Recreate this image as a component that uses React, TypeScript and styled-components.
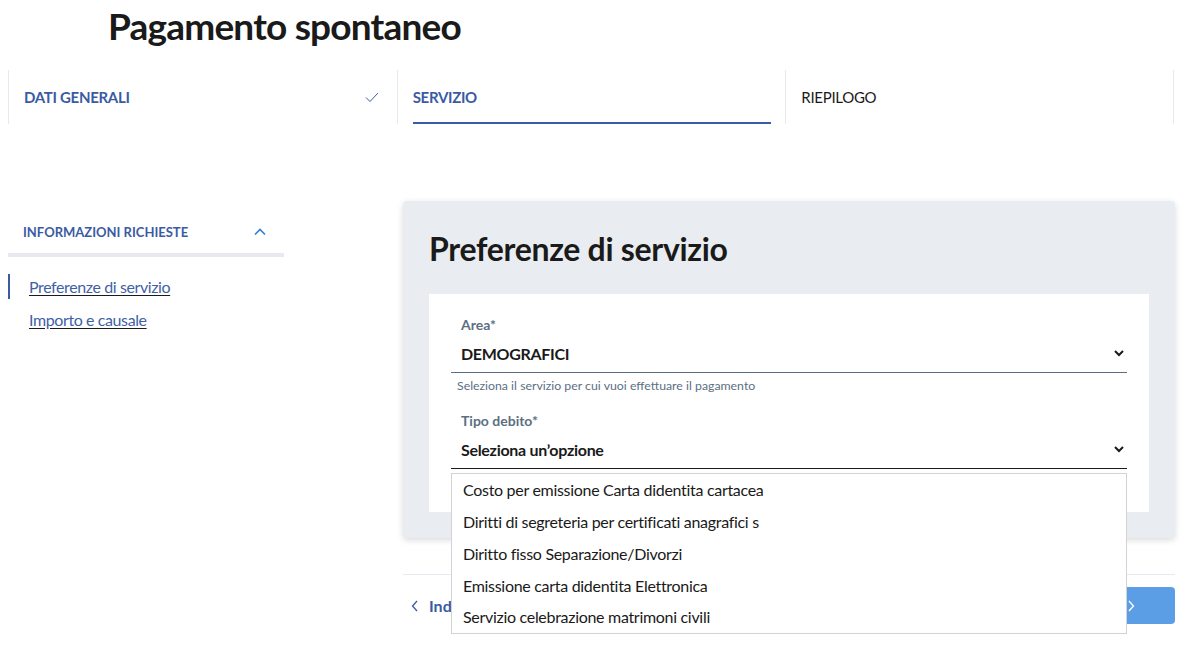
import React from 'react'
import styled, { createGlobalStyle } from 'styled-components'

const font = `'Lato', 'Roboto', sans-serif`

const colors = {
  blue: '#3a5ba3',
  link: '#3f5fa8',
  text: '#1a1a1a',
  label: '#5c6f82',
  divider: '#e6e9f2',
  card: '#e9edf1',
  button: '#5c9ee6'
}

const GlobalStyle = createGlobalStyle`
  body {
    margin: 0;
    background: #fff;
    font-family: ${font};
    color: ${colors.text};
  }
`

const Page = styled.div`
  width: 1185px;
  height: 664px;
  overflow: hidden;
`

const Title = styled.h1`
  margin: 0;
  padding: 3px 0 0 108px;
  height: 70px;
  box-sizing: border-box;
  font-size: 37px;
  line-height: 46px;
  font-weight: 700;
  letter-spacing: -0.8px;
`

const Stepper = styled.div`
  display: grid;
  grid-template-columns: repeat(3, 1fr);
  margin: 0 11px 0 8px;
  height: 54px;
`

const Step = styled.div<{ $last?: boolean }>`
  display: flex;
  align-items: center;
  justify-content: space-between;
  border-left: 1px solid ${colors.divider};
  border-right: ${(p) => (p.$last ? `1px solid ${colors.divider}` : 'none')};
  padding: 0 17px 0 15px;
  position: relative;
`

const StepLabel = styled.span<{ $active?: boolean; $done?: boolean }>`
  font-size: 15px;
  letter-spacing: -0.3px;
  font-weight: ${(p) => (p.$active || p.$done ? 700 : 400)};
  color: ${(p) => (p.$active || p.$done ? colors.blue : colors.text)};
`

const StepUnderline = styled.div`
  position: absolute;
  left: 15px;
  right: 14px;
  bottom: 0;
  height: 2px;
  background: ${colors.blue};
`

const Main = styled.div`
  display: grid;
  grid-template-columns: 276px 771px;
  column-gap: 120px;
  padding: 77px 0 0 8px;
`

const Sidebar = styled.nav`
  padding-top: 9px;
`

const SideHeader = styled.div`
  display: flex;
  align-items: center;
  justify-content: space-between;
  height: 43px;
  padding: 0 17px 0 15px;
  border-bottom: 4px solid #e8e8f0;
  box-sizing: content-box;
`

const SideHeaderText = styled.span`
  font-size: 13px;
  font-weight: 700;
  color: ${colors.blue};
`

const SideList = styled.ul`
  list-style: none;
  margin: 17px 0 0;
  padding: 0;
`

const SideItem = styled.li<{ $active?: boolean }>`
  display: flex;
  align-items: center;
  padding-left: ${(p) => (p.$active ? '19px' : '21px')};
  border-left: ${(p) => (p.$active ? `2px solid ${colors.blue}` : 'none')};
  height: ${(p) => (p.$active ? '25px' : '34px')};
  margin-bottom: ${(p) => (p.$active ? '9px' : '0')};
  margin-top: ${(p) => (p.$active ? '0' : '-6px')};
`

const SideLink = styled.a`
  font-size: 16px;
  letter-spacing: -0.4px;
  color: ${colors.link};
  text-decoration: underline;
  text-decoration-color: #1a1a1a;
  text-underline-offset: 2px;
`

const Column = styled.div`
  margin-left: -1px;
`

const Card = styled.section`
  background: ${colors.card};
  border-radius: 4px;
  padding: 28px 26px 26px;
  box-shadow: 0 2px 6px rgba(0, 0, 0, 0.15);
  height: 337px;
  box-sizing: border-box;
`

const CardTitle = styled.h2`
  margin: 0 0 25px;
  font-size: 32px;
  line-height: 40px;
  font-weight: 700;
  letter-spacing: -0.3px;
`

const FormBox = styled.div`
  background: #fff;
  padding: 22px 22px 0;
  height: 218px;
  box-sizing: border-box;
`

const Field = styled.div`
  position: relative;
  margin-bottom: 19px;
`

const FieldLabel = styled.div`
  font-size: 14px;
  font-weight: 700;
  color: ${colors.label};
  padding-left: 10px;
  line-height: 18px;
`

const SelectBox = styled.div<{ $focused?: boolean }>`
  display: flex;
  align-items: center;
  justify-content: space-between;
  height: 38px;
  padding: 0 2px 0 10px;
  border-bottom: 1px solid ${(p) => (p.$focused ? '#1a1a1a' : colors.label)};
  font-size: 16px;
  font-weight: 700;
  letter-spacing: -0.3px;
  color: ${colors.text};
`

const Hint = styled.div`
  font-size: 12.3px;
  color: ${colors.label};
  padding: 5px 0 0 6px;
`

const Menu = styled.ul`
  position: absolute;
  top: 61px;
  left: 0;
  right: 0;
  margin: 0;
  padding: 0;
  list-style: none;
  background: #fff;
  border: 1px solid #d3d3d3;
  z-index: 10;
`

const MenuItem = styled.li`
  height: 31.75px;
  display: flex;
  align-items: center;
  padding-left: 11px;
  font-size: 16px;
  letter-spacing: -0.3px;
  color: ${colors.text};
`

const Footer = styled.div`
  margin-top: 36px;
  border-top: 1px solid ${colors.divider};
  display: flex;
  align-items: center;
  justify-content: space-between;
  padding-top: 12px;
`

const BackLink = styled.a`
  display: flex;
  align-items: center;
  gap: 10px;
  padding-left: 8px;
  font-size: 16px;
  font-weight: 700;
  color: ${colors.blue};
`

const NextButton = styled.button`
  display: flex;
  align-items: center;
  justify-content: flex-end;
  gap: 8px;
  height: 37px;
  width: 130px;
  padding: 0 40px 0 16px;
  border: none;
  border-radius: 4px;
  background: ${colors.button};
  color: #fff;
  font-family: ${font};
  font-size: 16px;
  font-weight: 700;
`

const Check = () => (
  <svg width="16" height="16" viewBox="0 0 16 16" fill="none">
    <path d="M2 8.5l4 4L14 4" stroke={colors.blue} strokeWidth="1" />
  </svg>
)

const ChevronUp = () => (
  <svg width="14" height="10" viewBox="0 0 14 10" fill="none">
    <path d="M2 7.5l5-5 5 5" stroke="#2f7fd8" strokeWidth="1.6" />
  </svg>
)

const ChevronDown = () => (
  <svg width="12" height="10" viewBox="0 0 12 10" fill="none">
    <path d="M2 3l4 4 4-4" stroke="#1a1a1a" strokeWidth="2" />
  </svg>
)

const Chevron = ({ dir, color }: { dir: 'left' | 'right'; color: string }) => (
  <svg width="8" height="12" viewBox="0 0 8 12" fill="none">
    <path
      d={dir === 'left' ? 'M6 1L1.5 6 6 11' : 'M2 1l4.5 5L2 11'}
      stroke={color}
      strokeWidth="1.3"
    />
  </svg>
)

const options = [
  'Costo per emissione Carta didentita cartacea',
  'Diritti di segreteria per certificati anagrafici s',
  'Diritto fisso Separazione/Divorzi',
  'Emissione carta didentita Elettronica',
  'Servizio celebrazione matrimoni civili'
]

export default function App() {
  return (
    <Page>
      <GlobalStyle />
      <Title>Pagamento spontaneo</Title>
      <Stepper>
        <Step>
          <StepLabel $done>DATI GENERALI</StepLabel>
          <Check />
        </Step>
        <Step>
          <StepLabel $active>SERVIZIO</StepLabel>
          <StepUnderline />
        </Step>
        <Step $last>
          <StepLabel>RIEPILOGO</StepLabel>
        </Step>
      </Stepper>
      <Main>
        <Sidebar>
          <SideHeader>
            <SideHeaderText>INFORMAZIONI RICHIESTE</SideHeaderText>
            <ChevronUp />
          </SideHeader>
          <SideList>
            <SideItem $active>
              <SideLink>Preferenze di servizio</SideLink>
            </SideItem>
            <SideItem>
              <SideLink>Importo e causale</SideLink>
            </SideItem>
          </SideList>
        </Sidebar>
        <Column>
          <Card>
            <CardTitle>Preferenze di servizio</CardTitle>
            <FormBox>
              <Field>
                <FieldLabel>Area*</FieldLabel>
                <SelectBox>
                  DEMOGRAFICI
                  <ChevronDown />
                </SelectBox>
                <Hint>Seleziona il servizio per cui vuoi effettuare il pagamento</Hint>
              </Field>
              <Field>
                <FieldLabel>Tipo debito*</FieldLabel>
                <SelectBox $focused>
                  Seleziona un’opzione
                  <ChevronDown />
                </SelectBox>
                <Menu>
                  {options.map((o) => (
                    <MenuItem key={o}>{o}</MenuItem>
                  ))}
                </Menu>
              </Field>
            </FormBox>
          </Card>
          <Footer>
            <BackLink>
              <Chevron dir="left" color={colors.blue} />
              Indietro
            </BackLink>
            <NextButton>
              Avanti
              <Chevron dir="right" color="#fff" />
            </NextButton>
          </Footer>
        </Column>
      </Main>
    </Page>
  )
}
